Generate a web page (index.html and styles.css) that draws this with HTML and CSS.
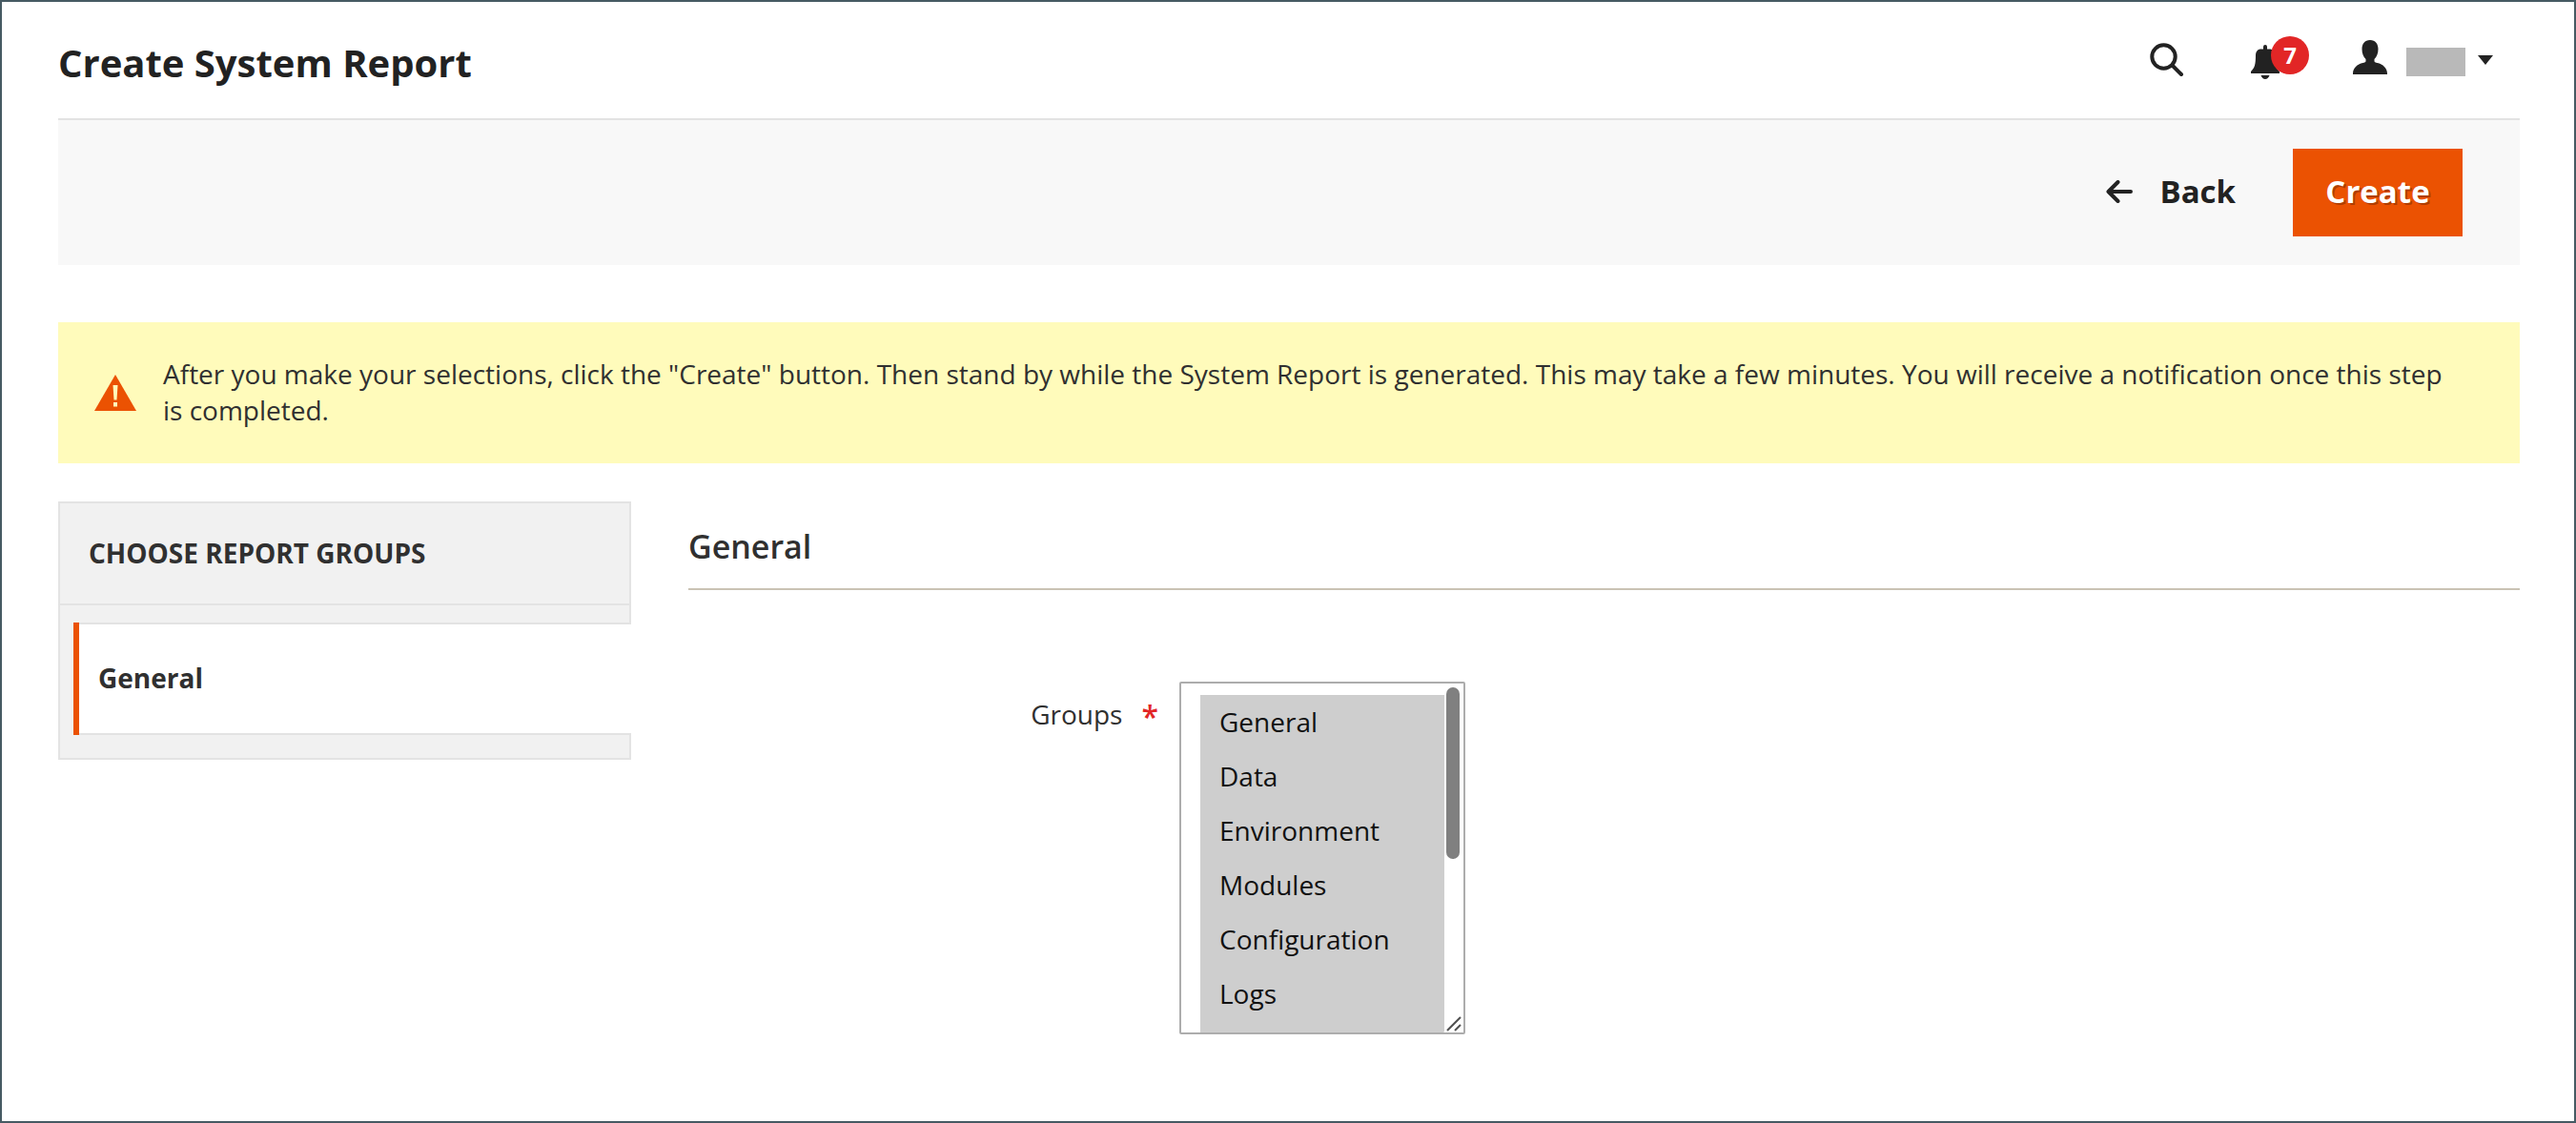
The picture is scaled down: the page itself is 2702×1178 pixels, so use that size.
FILE: index.html
```html
<!DOCTYPE html>
<html lang="en">
<head>
<meta charset="utf-8">
<meta name="viewport" content="width=device-width, initial-scale=1">
<title>Create System Report</title>
<link rel="stylesheet" href="styles.css">
</head>
<body>
<div class="page">
  <header class="page-header">
    <h1 class="page-title">Create System Report</h1>
    <div class="header-tools">
      <button class="tool" type="button" aria-label="Search">
        <svg class="icon-search" viewBox="0 0 36 36" aria-hidden="true"><circle cx="14.500" cy="14.500" r="12.200"/><path d="M23.500 23.500 33 33"/></svg>
      </button>
      <button class="tool tool-bell" type="button" aria-label="Notifications">
        <svg class="icon-bell" viewBox="0 0 30 36" aria-hidden="true"><path d="M13 4.500V2a2 2 0 0 1 4 0v2.500h3.500c3 .8 4.500 3 4.500 6C25 21 26 24 30 28v2H0v-2c4-4 5-7 5-17.500 0-3 1.500-5.200 4.500-6zM10.500 32h9c-1 2.800-2.500 4-4.500 4s-3.500-1.200-4.500-4z"/></svg>
        <span class="badge">7</span>
      </button>
      <button class="tool tool-account" type="button" aria-label="Account">
        <svg class="icon-user" viewBox="0 0 36 36" aria-hidden="true"><path d="M18 0c5.500 0 8.500 4 8.500 9.500 0 4.500-1.500 8-4 10.500v2.500c.6 1 1.500 1.200 3 1.500 6 1.200 10.500 5.500 10.500 11v1H0v-1c0-5.500 4.500-9.800 10.500-11 1.500-.3 2.400-.5 3-1.500V20c-2.500-2.500-4-6-4-10.500C9.500 4 12.500 0 18 0z"/></svg>
        <span class="account-name"></span>
        <svg class="icon-caret" viewBox="0 0 16 10" aria-hidden="true"><path d="M0 0h16L8 10z"/></svg>
      </button>
    </div>
  </header>

  <div class="page-actions">
    <button class="button-back" type="button">
      <svg class="icon-back" viewBox="0 0 28 24" aria-hidden="true"><path d="M12.500 2 2.500 12l10 10M3 12h23"/></svg>
      Back
    </button>
    <button class="button-primary" type="submit" form="report-form">Create</button>
  </div>

  <div class="message" role="status">
    <svg class="icon-warning" viewBox="0 0 44 38" aria-hidden="true"><path class="sign" d="M22 0 44 38H0z"/><path class="mark" d="M19.500 11h5l-1 15.500h-3zM20 29h4v4.500h-4z"/></svg>
    <p class="message-text">After you make your selections, click the "Create" button. Then stand by while the System Report is generated. This may take a few minutes. You will receive a notification once this step is completed.</p>
  </div>

  <div class="columns">
    <nav class="tabs" aria-labelledby="tabs-title">
      <h2 class="tabs-title" id="tabs-title">Choose Report Groups</h2>
      <ul class="tabs-list">
        <li><a class="tab" href="#general" aria-current="page">General</a></li>
      </ul>
    </nav>
    <main class="content" id="general">
      <h2 class="section-title">General</h2>
      <form class="field" id="report-form">
        <label class="field-label" for="groups">Groups <span class="required">*</span></label>
        <div class="multiselect">
          <select class="multiselect-list" id="groups" name="groups" multiple required>
            <option selected>General</option>
            <option selected>Data</option>
            <option selected>Environment</option>
            <option selected>Modules</option>
            <option selected>Configuration</option>
            <option selected>Logs</option>
            <option selected>Attributes</option>
            <option selected>Cron</option>
            <option selected>Design</option>
            <option selected>Events</option>
            <option selected>Indexes</option>
            <option selected>Stores</option>
          </select>
          <span class="scroll-thumb"></span>
          <svg class="resize-grip" viewBox="0 0 16 16" aria-hidden="true"><path d="M1 15 15 1M9 15l6-6"/></svg>
        </div>
      </form>
    </main>
  </div>
</div>
</body>
</html>
```

FILE: styles.css
```css
* {
  box-sizing: border-box;
}

body {
  margin: 0;
  background: #fff;
  color: #303030;
  font-family: "Open Sans", "Noto Sans", sans-serif;
  font-size: 28px;
  line-height: 38px;
}

h1,
h2,
p,
ul {
  margin: 0;
  padding: 0;
}

button,
select {
  font: inherit;
}

button {
  border: 0;
  margin: 0;
  padding: 0;
  background: none;
  color: #222;
  cursor: pointer;
}

svg {
  display: block;
  flex: none;
  fill: #222;
}

.page {
  min-height: 100vh;
  padding: 0 57px 0 59px;
  border: 2px solid #465a63;
}

/* Header */
.page-header {
  display: flex;
  justify-content: space-between;
  align-items: flex-start;
  height: 124px;
  padding-top: 36px;
  border-bottom: 2px solid #e3e3e3;
}

.page-title {
  color: #222;
  font-size: 40px;
  font-weight: 700;
  line-height: 56px;
}

.header-tools {
  display: flex;
  align-items: flex-start;
  gap: 70px;
  padding-right: 28px;
}

.tool {
  display: flex;
  align-items: center;
  height: 46px;
}

.icon-search {
  width: 36px;
  height: 36px;
  margin-top: 4px;
  fill: none;
  stroke: #222;
  stroke-width: 4;
  stroke-linecap: round;
}

.tool-bell {
  position: relative;
  margin-right: 7px;
  padding-top: 8px;
}

.icon-bell {
  width: 30px;
  height: 36px;
}

.badge {
  position: absolute;
  top: 0;
  left: 21px;
  width: 40px;
  height: 40px;
  border-radius: 50%;
  background: #e22626;
  color: #fff;
  font-size: 24px;
  font-weight: 700;
  line-height: 40px;
  text-align: center;
}

.icon-user {
  width: 36px;
  height: 36px;
  margin-bottom: 2px;
}

.account-name {
  width: 62px;
  height: 30px;
  margin: 8px 13px 0 20px;
  background: #b9b9b9;
}

.icon-caret {
  width: 16px;
  height: 10px;
  margin-top: 4px;
}

/* Toolbar */
.page-actions {
  display: flex;
  justify-content: flex-end;
  align-items: center;
  gap: 60px;
  padding: 30px 60px;
  background: #f8f8f8;
}

.button-back,
.button-primary {
  padding: 23px 0 25px;
  font-size: 33px;
  font-weight: 700;
  line-height: 44px;
}

.button-back {
  display: flex;
  align-items: center;
  gap: 28px;
}

.icon-back {
  width: 28px;
  height: 24px;
  fill: none;
  stroke: #222;
  stroke-width: 4;
  stroke-linecap: round;
  stroke-linejoin: round;
}

.button-primary {
  min-width: 178px;
  background: #eb5202;
  color: #fff;
  text-shadow: 2px 2px 0 rgba(0, 0, 0, .25);
}

/* Notice */
.message {
  display: flex;
  align-items: center;
  gap: 28px;
  margin-top: 60px;
  padding: 35px 80px 37px 38px;
  background: #fffbbb;
}

.icon-warning {
  width: 44px;
  height: 38px;
  margin-top: 2px;
}

.icon-warning .sign {
  fill: #eb5202;
}

.icon-warning .mark {
  fill: #fffbbb;
}

/* Columns */
.columns {
  display: flex;
  align-items: flex-start;
  gap: 60px;
  padding-top: 40px;
}

.tabs {
  flex: none;
  width: 601px;
  padding-bottom: 24px;
  border: 2px solid #e3e3e3;
  background: #f1f1f1;
}

.tabs-title {
  padding: 33px 30px 34px;
  border-bottom: 2px solid #e3e3e3;
  font-size: 28px;
  font-weight: 700;
  text-transform: uppercase;
}

.tabs-list {
  margin: 18px -2px 0 14px;
  list-style: none;
}

.tabs-list li {
  border-left: 6px solid #eb5202;
}

.tab {
  display: block;
  padding: 37px 20px 39px;
  border: solid #e3e3e3;
  border-width: 2px 0;
  background: #fff;
  color: #303030;
  font-weight: 700;
  text-decoration: none;
}

.content {
  flex: 1;
}

.section-title {
  padding: 24px 0 21px;
  border-bottom: 2px solid #cac3b4;
  font-size: 34px;
  font-weight: 600;
  line-height: 46px;
}

.field {
  display: flex;
  align-items: flex-start;
  gap: 22px;
  padding-top: 96px;
}

.field-label {
  display: flex;
  justify-content: flex-end;
  gap: 20px;
  width: 493px;
  padding-top: 15px;
}

.required {
  padding-top: 3px;
  color: #e22626;
  font-size: 32px;
  font-weight: 600;
}

.multiselect {
  position: relative;
  width: 300px;
  padding: 0 20px 0 0;
  border: 2px solid #adadad;
  border-radius: 2px;
  background: #fff;
}

.multiselect-list {
  display: block;
  width: 100%;
  height: 366px;
  margin: 0;
  padding: 12px 0 12px 20px;
  border: 0;
  outline: 0;
  background: #fff;
  color: #111;
  overflow-y: scroll;
  scrollbar-width: none;
}

.multiselect-list option {
  min-height: 57px;
  padding: 9px 20px 10px;
  background: #cecece linear-gradient(#cecece, #cecece);
  color: #111;
  line-height: 38px;
}

.scroll-thumb {
  position: absolute;
  top: 4px;
  right: 4px;
  width: 14px;
  height: 180px;
  border-radius: 7px;
  background: #808080;
}

.resize-grip {
  position: absolute;
  right: 2px;
  bottom: 1px;
  width: 16px;
  height: 16px;
  fill: none;
  stroke: #505050;
  stroke-width: 2;
}
```
